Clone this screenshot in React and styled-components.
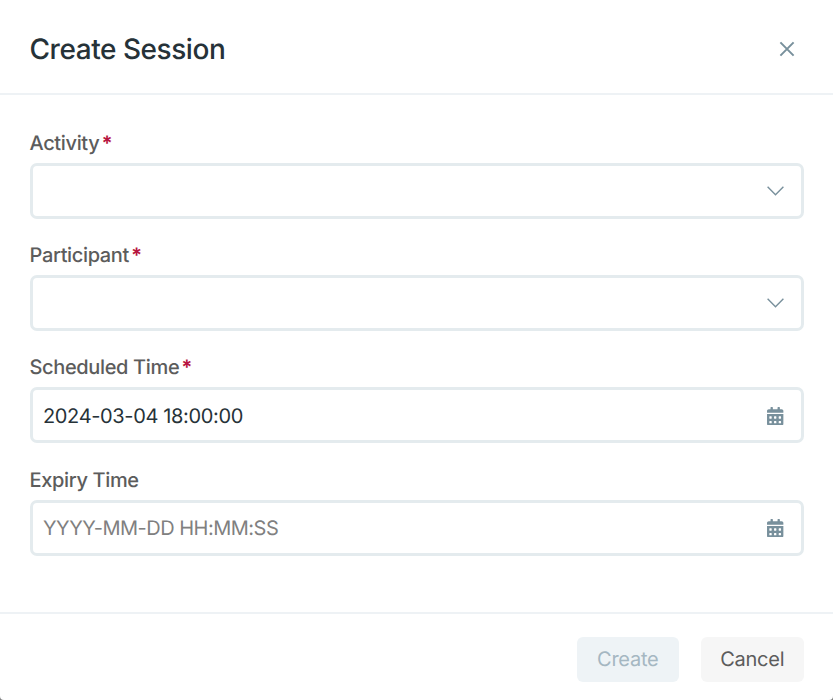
import React from 'react';
import styled, { createGlobalStyle } from 'styled-components';
import { FaCalendarAlt } from 'react-icons/fa';

const GlobalStyle = createGlobalStyle`
  * {
    box-sizing: border-box;
  }

  body {
    background-color: #7e7f80;
    font-family: Inter, "Liberation Sans", sans-serif;
    margin: 0;
    text-rendering: geometricPrecision;
  }
`;

const Dialog = styled.section`
  background-color: #fff;
  border-radius: 0 0 4px 4px;
  display: flex;
  flex-direction: column;
  height: 700px;
  width: 100%;
`;

const Header = styled.header`
  align-items: center;
  border-bottom: 2px solid #eef2f5;
  display: flex;
  height: 95px;
  justify-content: space-between;
  padding: 5px 38px 0 29.5px;
`;

const Title = styled.h1`
  color: #263238;
  font-size: 28px;
  font-weight: 500;
  letter-spacing: -0.45px;
  line-height: 34px;
  margin: 0;
`;

const CloseButton = styled.button`
  background: none;
  border: 0;
  color: #78909c;
  display: flex;
  padding: 0;
`;

const Form = styled.form`
  display: flex;
  flex: 1;
  flex-direction: column;
  gap: 24.2px;
  padding: 36px 29.5px 0;
`;

const Field = styled.div`
  display: flex;
  flex-direction: column;
`;

const Label = styled.label`
  color: #5c5c5c;
  display: flex;
  font-size: 20px;
  font-weight: 500;
  gap: 2px;
  height: 32px;
  letter-spacing: -0.35px;
  line-height: 24px;
`;

const Required = styled.span`
  color: #b71540;
  font-weight: 700;
`;

const Control = styled.div`
  align-items: center;
  background-color: #fff;
  border: 3px solid #e4ebee;
  border-radius: 7px;
  color: #78909c;
  display: flex;
  height: 56px;
  padding: 0 17px 0 10.5px;
`;

const Input = styled.input`
  background: none;
  border: 0;
  color: #263238;
  flex: 1;
  font-family: inherit;
  font-size: 20px;
  letter-spacing: ${({ placeholder }) => (placeholder ? '-0.5px' : '-0.35px')};
  line-height: 24px;
  min-width: 0;
  outline: 0;
  padding: 1px 0 0;
  text-rendering: inherit;

  &::placeholder {
    color: #808080;
    opacity: 1;
  }
`;

const Footer = styled.footer`
  border-top: 2px solid #eef2f5;
  display: flex;
  gap: 22px;
  height: 88px;
  justify-content: flex-end;
  padding: 23px 29.5px 0;
`;

const Button = styled.button`
  background-color: ${({ $primary }) => ($primary ? '#eef3f6' : '#f6f6f6')};
  border: 0;
  border-radius: 6px;
  color: ${({ $primary }) => ($primary ? '#a5b7c2' : '#5c5c5c')};
  font-family: inherit;
  font-size: 20px;
  height: 45px;
  letter-spacing: -0.25px;
  line-height: 24px;
  padding: 0 0 1px;
  text-rendering: inherit;
  width: 102.5px;
`;

const Close = () => (
  <svg width="16" height="16" viewBox="0 0 16 16" fill="none" stroke="currentColor" strokeWidth="2">
    <path d="M1.4 1.4 14.6 14.6M14.6 1.4 1.4 14.6" />
  </svg>
);

const Chevron = () => (
  <svg width="17" height="10" viewBox="0 0 17 10" fill="none" stroke="currentColor" strokeWidth="1.4">
    <path d="M.6.8 8.5 8.8 16.4.8" />
  </svg>
);

const Calendar = styled(FaCalendarAlt)`
  height: 18.7px;
  margin-top: 1px;
  width: 16.4px;
`;

const FIELDS = [
  { id: 'activity', label: 'Activity', required: true, icon: <Chevron /> },
  { id: 'participant', label: 'Participant', required: true, icon: <Chevron /> },
  {
    id: 'scheduled',
    label: 'Scheduled Time',
    required: true,
    value: '2024-03-04 18:00:00',
    icon: <Calendar />,
  },
  { id: 'expiry', label: 'Expiry Time', placeholder: 'YYYY-MM-DD HH:MM:SS', icon: <Calendar /> },
];

export default () => (
  <>
    <GlobalStyle />
    <Dialog>
      <Header>
        <Title>Create Session</Title>
        <CloseButton aria-label="Close">
          <Close />
        </CloseButton>
      </Header>
      <Form>
        {FIELDS.map(({ id, label, required, value, placeholder, icon }) => (
          <Field key={id}>
            <Label htmlFor={id}>
              {label}
              {required && <Required>*</Required>}
            </Label>
            <Control>
              <Input id={id} defaultValue={value} placeholder={placeholder} />
              {icon}
            </Control>
          </Field>
        ))}
      </Form>
      <Footer>
        <Button $primary disabled>
          Create
        </Button>
        <Button>Cancel</Button>
      </Footer>
    </Dialog>
  </>
);
